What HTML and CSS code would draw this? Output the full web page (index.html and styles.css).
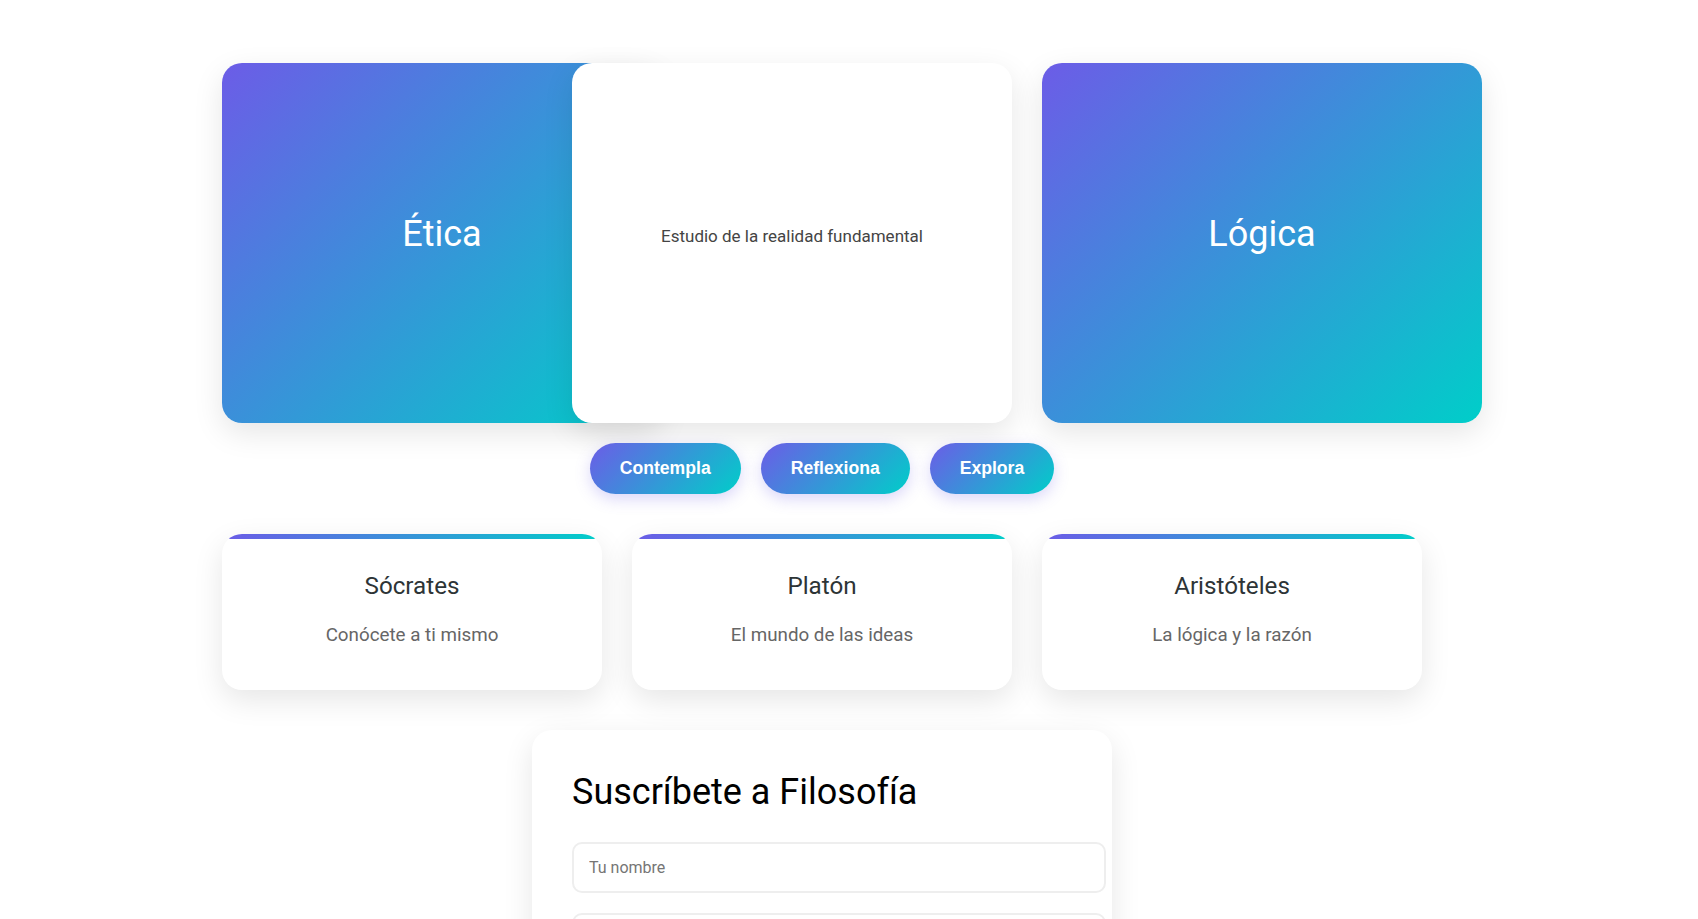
FILE: index.html
```html
<!DOCTYPE html>
<html lang="es">
<head>
<meta charset="utf-8">
<title>Filosofía</title>
<link rel="stylesheet" href="styles.css">
</head>
<body>
<main class="page">
  <section class="topics">
    <div class="topic topic-front">
      <h2 class="topic-title">Ética</h2>
    </div>
    <div class="topic topic-back">
      <p class="topic-desc">Estudio de la realidad fundamental</p>
    </div>
    <div class="topic topic-front">
      <h2 class="topic-title">Lógica</h2>
    </div>
  </section>

  <div class="actions">
    <button class="btn">Contempla</button>
    <button class="btn">Reflexiona</button>
    <button class="btn">Explora</button>
  </div>

  <section class="thinkers">
    <article class="thinker">
      <h3 class="thinker-name">Sócrates</h3>
      <p class="thinker-quote">Conócete a ti mismo</p>
    </article>
    <article class="thinker">
      <h3 class="thinker-name">Platón</h3>
      <p class="thinker-quote">El mundo de las ideas</p>
    </article>
    <article class="thinker">
      <h3 class="thinker-name">Aristóteles</h3>
      <p class="thinker-quote">La lógica y la razón</p>
    </article>
  </section>

  <form class="subscribe">
    <h2 class="subscribe-title">Suscríbete a Filosofía</h2>
    <input class="field" type="text" placeholder="Tu nombre">
    <input class="field" type="email" placeholder="Tu correo electrónico">
  </form>
</main>
</body>
</html>
```

FILE: styles.css
```css
* {
  box-sizing: content-box;
}

html, body {
  margin: 0;
  padding: 0;
  background: #ffffff;
  font-family: Roboto, "Noto Sans", sans-serif;
  overflow: hidden;
}

.page {
  width: 1200px;
  margin: 0 0 0 222px;
  padding-top: 63px;
}

.topics {
  display: grid;
  grid-template-columns: repeat(3, 380px);
  column-gap: 30px;
  height: 360px;
}

.topic {
  width: 440px;
  height: 360px;
  border-radius: 20px;
  display: flex;
  flex-direction: column;
  align-items: center;
  justify-content: center;
  box-shadow: 0 10px 30px rgba(0, 0, 0, 0.1);
}

.topic-front {
  background: linear-gradient(135deg, #6c5ce7 0%, #00cec9 100%);
}

.topic-back {
  background: #ffffff;
  margin-left: -60px;
}

.topic-title {
  margin: 0 0 18px;
  font-size: 36px;
  font-weight: 400;
  color: #ffffff;
}

.topic-desc {
  margin: 0 0 14px;
  font-size: 17px;
  color: #444444;
}

.actions {
  display: flex;
  justify-content: center;
  gap: 20px;
  margin: 20px 0 40px;
}

.btn {
  border: none;
  border-radius: 50px;
  padding: 15px 30px;
  font-family: "Liberation Sans", Arial, sans-serif;
  font-size: 17.6px;
  font-weight: 700;
  color: #ffffff;
  background: linear-gradient(135deg, #6c5ce7 0%, #00cec9 100%);
  box-shadow: 0 5px 15px rgba(108, 92, 231, 0.25);
  cursor: pointer;
}

.thinkers {
  display: grid;
  grid-template-columns: repeat(3, 380px);
  column-gap: 30px;
}

.thinker {
  position: relative;
  overflow: hidden;
  height: 74px;
  padding: 38px 20px 44px;
  border-radius: 20px;
  background: #ffffff;
  text-align: center;
  box-shadow: 0 10px 30px rgba(0, 0, 0, 0.1);
}

.thinker::before {
  content: "";
  position: absolute;
  top: 0;
  left: 0;
  right: 0;
  height: 5px;
  background: linear-gradient(90deg, #6c5ce7, #00cec9);
}

.thinker-name {
  margin: 0 0 24px;
  font-size: 24.2px;
  line-height: 28px;
  font-weight: 400;
  color: #2d3436;
}

.thinker-quote {
  margin: 0;
  font-size: 18.8px;
  line-height: 22px;
  color: #666666;
}

.subscribe {
  width: 500px;
  margin: 40px auto 0;
  padding: 40px;
  border-radius: 20px;
  background: #ffffff;
  box-shadow: 0 10px 30px rgba(0, 0, 0, 0.1);
}

.subscribe-title {
  margin: 0 0 28px;
  font-size: 36px;
  line-height: 44px;
  font-weight: 400;
  color: #000000;
}

.field {
  display: block;
  width: 100%;
  margin: 0 0 20px;
  padding: 14px 15px;
  border: 2px solid #eeeeee;
  border-radius: 10px;
  font-family: Roboto, "Noto Sans", sans-serif;
  font-size: 16px;
  color: #333333;
  background: #ffffff;
  outline: none;
}

.field::placeholder {
  color: #757575;
}
```
